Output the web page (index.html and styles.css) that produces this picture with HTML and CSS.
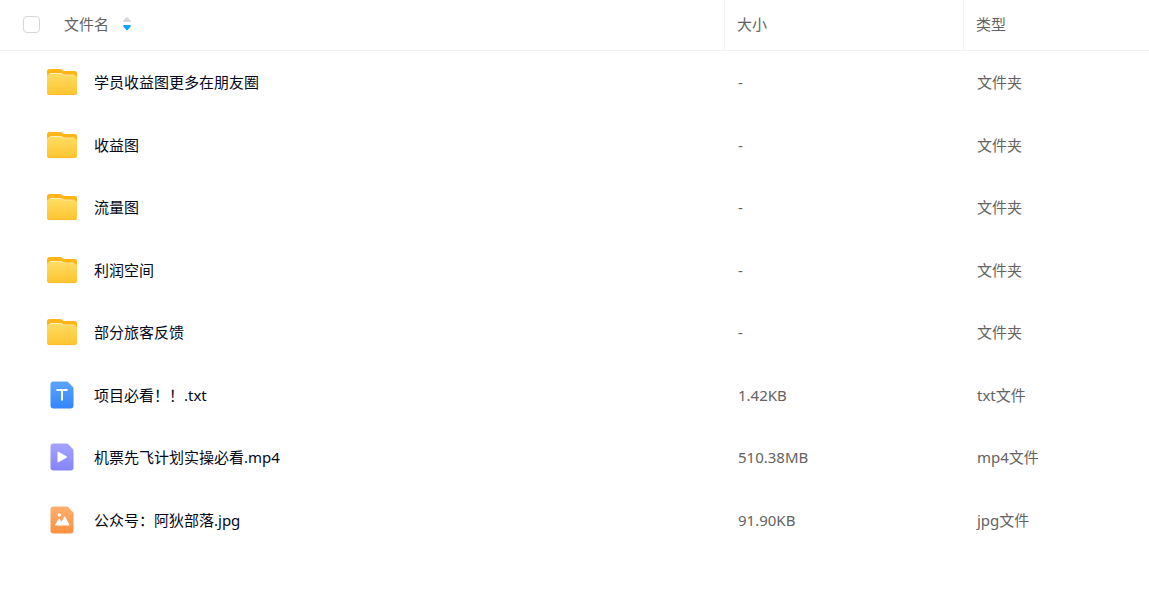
FILE: index.html
```html
<!DOCTYPE html>
<html lang="zh-CN">
<head>
    <meta charset="UTF-8">
    <meta name="viewport" content="width=device-width, initial-scale=1.0">
    <title>文件列表</title>
    <link rel="stylesheet" href="styles.css">
</head>
<body>

    <!-- Shared file icons -->
    <svg class="sprite" width="0" height="0" aria-hidden="true">
        <defs>
            <linearGradient id="folderFill" x1="0" y1="0" x2="0" y2="1">
                <stop offset="0" stop-color="#ffdc62"/>
                <stop offset="1" stop-color="#ffc42e"/>
            </linearGradient>
            <linearGradient id="paperFill" x1="0" y1="0" x2="1" y2="0">
                <stop offset="0" stop-color="#fff3cf"/>
                <stop offset="1" stop-color="#ffe08a"/>
            </linearGradient>
            <linearGradient id="txtFill" x1="0" y1="0" x2="0" y2="1">
                <stop offset="0" stop-color="#5ba3fd"/>
                <stop offset="1" stop-color="#3485fb"/>
            </linearGradient>
            <linearGradient id="videoFill" x1="0" y1="0" x2="0" y2="1">
                <stop offset="0" stop-color="#a6a4ff"/>
                <stop offset="1" stop-color="#8583fb"/>
            </linearGradient>
            <linearGradient id="imageFill" x1="0" y1="0" x2="0" y2="1">
                <stop offset="0" stop-color="#ffae70"/>
                <stop offset="1" stop-color="#ff9040"/>
            </linearGradient>
        </defs>
        <symbol id="folder" viewBox="0 0 32 32">
            <path fill="#ffb516" d="M1 5.500Q1 3 3.500 3H14Q15.500 3 16.300 4Q17 5 18.500 5H28.500Q31 5 31 7.500V20H1Z"/>
            <path fill="url(#paperFill)" d="M3.500 8.200Q3.500 7 5 7H14.500Q16 7 17 8L18 8.600H28.500V14H3.500Z"/>
            <path fill="url(#folderFill)" d="M1 10.500Q1 8 3.500 8H14Q15.500 8 16.300 8.800Q17 9.500 18.500 9.500H28.500Q31 9.500 31 12V26.500Q31 29 28.500 29H3.500Q1 29 1 26.500Z"/>
            <path fill="none" stroke="#fdb927" stroke-width=".8" d="M1.500 27.300Q2 28.600 3.500 28.600H28.500Q30 28.600 30.500 27.300"/>
        </symbol>
        <symbol id="txt" viewBox="0 0 32 32">
            <path fill="url(#txtFill)" d="M4.500 5.500Q4.500 2.500 7.500 2.500H20.500Q21.500 2.500 22.300 3.300L26.700 7.700Q27.500 8.500 27.500 9.500V26.500Q27.500 29.500 24.500 29.500H7.500Q4.500 29.500 4.500 26.500Z"/>
            <path fill="#fff" d="M10.500 10H21.500V12H17V21.500H15V12H10.500Z"/>
        </symbol>
        <symbol id="video" viewBox="0 0 32 32">
            <path fill="url(#videoFill)" d="M4.500 5.500Q4.500 2.500 7.500 2.500H20.500Q21.500 2.500 22.300 3.300L26.700 7.700Q27.500 8.500 27.500 9.500V26.500Q27.500 29.500 24.500 29.500H7.500Q4.500 29.500 4.500 26.500Z"/>
            <path fill="#fff" d="M11.500 11.200Q11.500 10.200 12.400 10.700L20.500 15.300Q21.500 16 20.500 16.700L12.400 21.300Q11.500 21.800 11.500 20.800Z"/>
        </symbol>
        <symbol id="image" viewBox="0 0 32 32">
            <path fill="url(#imageFill)" d="M4.500 5.500Q4.500 2.500 7.500 2.500H20.500Q21.500 2.500 22.300 3.300L26.700 7.700Q27.500 8.500 27.500 9.500V26.500Q27.500 29.500 24.500 29.500H7.500Q4.500 29.500 4.500 26.500Z"/>
            <circle fill="#fff" cx="13.300" cy="11" r="1.700"/>
            <path fill="#fff" d="M9.300 21.500Q8.500 21.500 9 20.700L12.500 15.200Q13 14.500 13.600 15.200L15.500 17.500L18.300 12.700Q18.800 12 19.300 12.700L23.300 20.600Q23.700 21.500 22.800 21.500Z"/>
        </symbol>
    </svg>

    <table class="file-list">
        <colgroup>
            <col>
            <col class="col-size">
            <col class="col-type">
        </colgroup>
        <thead>
            <tr>
                <th scope="col">
                    <div class="head-name">
                        <input type="checkbox" class="check-all" id="checkAll" aria-label="全选">
                        <button type="button" class="sort">
                            文件名
                            <svg width="8" height="14" viewBox="0 0 8 14" aria-hidden="true">
                                <path fill="#d4d7de" d="M3.300.4Q4-.2 4.700.4L7.600 3.400Q8.200 5 7 5H1Q-.2 5 .4 3.400Z"/>
                                <path fill="#06a7ff" d="M1 8H7Q8.200 8 7.600 9.600L4.700 13Q4 13.600 3.300 13L.4 9.600Q-.2 8 1 8Z"/>
                            </svg>
                        </button>
                    </div>
                </th>
                <th scope="col">大小</th>
                <th scope="col">类型</th>
            </tr>
        </thead>
        <tbody>
            <tr>
                <td><a href="#" class="file"><svg class="icon"><use href="#folder"/></svg>学员收益图更多在朋友圈</a></td>
                <td>-</td>
                <td>文件夹</td>
            </tr>
            <tr>
                <td><a href="#" class="file"><svg class="icon"><use href="#folder"/></svg>收益图</a></td>
                <td>-</td>
                <td>文件夹</td>
            </tr>
            <tr>
                <td><a href="#" class="file"><svg class="icon"><use href="#folder"/></svg>流量图</a></td>
                <td>-</td>
                <td>文件夹</td>
            </tr>
            <tr>
                <td><a href="#" class="file"><svg class="icon"><use href="#folder"/></svg>利润空间</a></td>
                <td>-</td>
                <td>文件夹</td>
            </tr>
            <tr>
                <td><a href="#" class="file"><svg class="icon"><use href="#folder"/></svg>部分旅客反馈</a></td>
                <td>-</td>
                <td>文件夹</td>
            </tr>
            <tr>
                <td><a href="#" class="file"><svg class="icon"><use href="#txt"/></svg>项目必看！！.txt</a></td>
                <td>1.42KB</td>
                <td>txt文件</td>
            </tr>
            <tr>
                <td><a href="#" class="file"><svg class="icon"><use href="#video"/></svg>机票先飞计划实操必看.mp4</a></td>
                <td>510.38MB</td>
                <td>mp4文件</td>
            </tr>
            <tr>
                <td><a href="#" class="file"><svg class="icon"><use href="#image"/></svg>公众号：阿狄部落.jpg</a></td>
                <td>91.90KB</td>
                <td>jpg文件</td>
            </tr>
        </tbody>
    </table>

</body>
</html>
```
FILE: styles.css
```css
body {
    margin: 0;
    background-color: #fff;
    color: #636363;
    font-family: "Noto Sans", "Noto Sans CJK SC", sans-serif;
    font-size: 15px;
    line-height: 20px;
}
.sprite {
    position: absolute;
}
.file-list {
    width: 100%;
    table-layout: fixed;
    border-collapse: separate;
    border-spacing: 0;
}
.col-size {
    width: 239px;
}
.col-type {
    width: 186px;
}
th,
td {
    padding: 0 0 0 13px;
    text-align: left;
    font-weight: normal;
    vertical-align: middle;
}
th {
    height: 48px;
    padding-bottom: 2px;
    border-bottom: 1px solid #f1f2f4;
}
th + th {
    padding-left: 12px;
    border-left: 1px solid #f1f2f4;
}
td + td {
    padding-left: 14px;
}
th:first-child,
td:first-child {
    padding-left: 0;
}
.head-name {
    display: flex;
    align-items: center;
    gap: 24px;
    padding-left: 23px;
}
.check-all {
    appearance: none;
    box-sizing: border-box;
    width: 17px;
    height: 17px;
    margin: 0;
    border: 1px solid #d4d7de;
    border-radius: 4px;
    background-color: #fff;
}
.check-all:checked {
    background-color: #06a7ff; /* Blue when everything is selected */
    border-color: #06a7ff;
}
.sort {
    display: flex;
    align-items: center;
    gap: 14px;
    padding: 0;
    border: none;
    background: none;
    color: inherit;
    font: inherit;
    cursor: pointer;
}
/* Rows average 62.5px */
tbody td {
    height: 62px;
}
tbody tr:nth-child(even) td {
    height: 63px;
}
.file {
    display: flex;
    align-items: center;
    gap: 16px;
    padding-left: 46px;
    color: #03081a;
    text-decoration: none;
}
.file:hover {
    color: #06a7ff;
}
.icon {
    width: 32px;
    height: 32px;
    flex-shrink: 0;
}
```
